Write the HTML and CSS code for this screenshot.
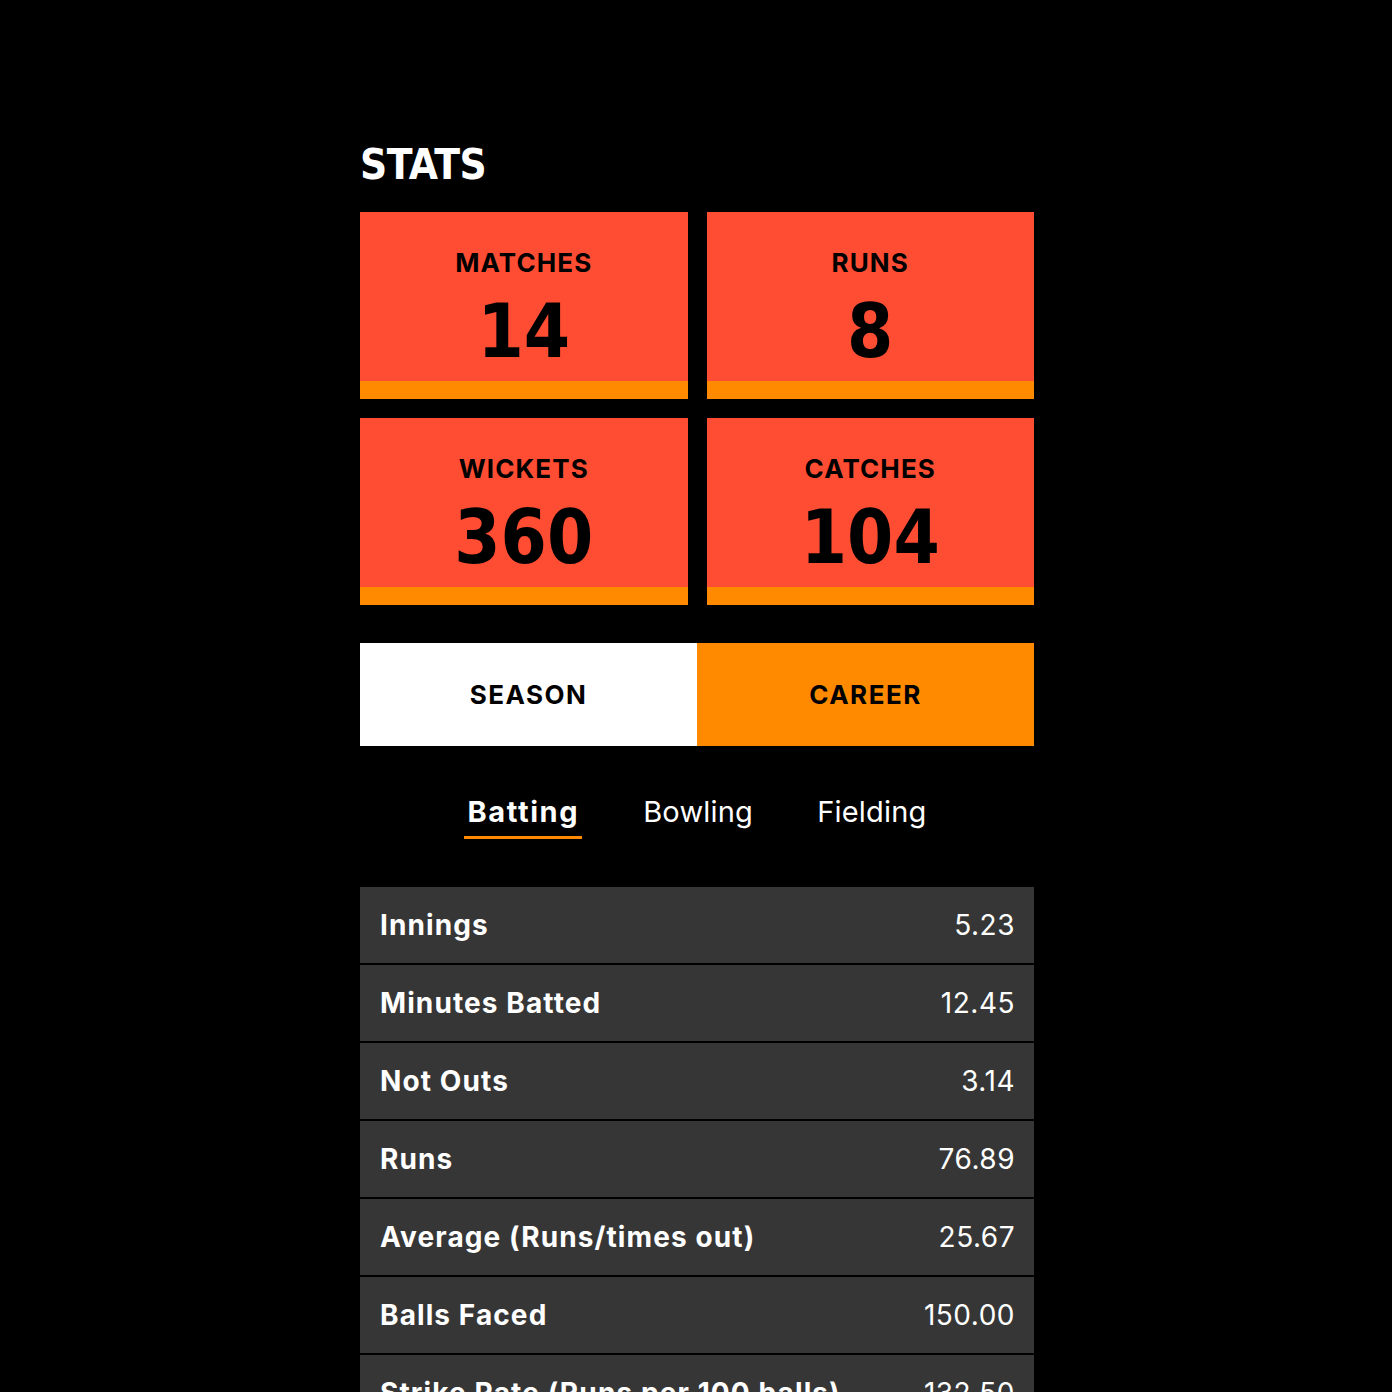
FILE: index.html
```html
<!DOCTYPE html>
<html>
<head>
<meta charset="utf-8">
<link rel="stylesheet" href="styles.css">
</head>
<body>
<main class="stats">
  <h1 class="title">STATS</h1>
  <section class="cards">
    <div class="card"><div class="card-label">MATCHES</div><div class="card-value">14</div></div>
    <div class="card"><div class="card-label">RUNS</div><div class="card-value">8</div></div>
    <div class="card"><div class="card-label">WICKETS</div><div class="card-value">360</div></div>
    <div class="card"><div class="card-label">CATCHES</div><div class="card-value">104</div></div>
  </section>
  <div class="toggle">
    <button class="toggle-btn toggle-season">SEASON</button>
    <button class="toggle-btn toggle-career">CAREER</button>
  </div>
  <nav class="tabs">
    <span class="tab tab-active">Batting</span>
    <span class="tab">Bowling</span>
    <span class="tab">Fielding</span>
  </nav>
  <ul class="rows">
    <li class="row"><span class="row-label">Innings</span><span class="row-value">5.23</span></li>
    <li class="row"><span class="row-label">Minutes Batted</span><span class="row-value">12.45</span></li>
    <li class="row"><span class="row-label">Not Outs</span><span class="row-value">3.14</span></li>
    <li class="row"><span class="row-label">Runs</span><span class="row-value">76.89</span></li>
    <li class="row"><span class="row-label">Average (Runs/times out)</span><span class="row-value">25.67</span></li>
    <li class="row"><span class="row-label">Balls Faced</span><span class="row-value">150.00</span></li>
    <li class="row"><span class="row-label">Strike Rate (Runs per 100 balls)</span><span class="row-value">132.50</span></li>
  </ul>
</main>
</body>
</html>
```
FILE: styles.css
```css
html, body {
  margin: 0;
  padding: 0;
  background: #000;
  height: 1392px;
  overflow: hidden;
}
.stats {
  width: 674px;
  margin-left: 360px;
  padding-top: 142px;
  font-family: Inter, "Noto Sans", sans-serif;
  color: #fff;
}
.title {
  margin: 0 0 24px;
  font-family: "DejaVu Sans Condensed", "DejaVu Sans", sans-serif;
  font-weight: 900;
  font-size: 42px;
  line-height: 46px;
  letter-spacing: -0.5px;
  color: #fff;
}
.cards {
  display: grid;
  grid-template-columns: 1fr 1fr;
  gap: 19px;
}
.card {
  height: 169px;
  background: #ff4d33;
  border-bottom: 18px solid #ff8a00;
  display: flex;
  flex-direction: column;
  align-items: center;
  color: #000;
}
.card-label {
  margin-top: 37px;
  font-weight: 700;
  font-size: 26px;
  line-height: 28px;
  letter-spacing: 1.1px;
}
.card-value {
  margin-top: 17px;
  font-family: "DejaVu Sans Condensed", "DejaVu Sans", sans-serif;
  font-weight: 900;
  font-size: 74px;
  line-height: 74px;
}
.toggle {
  display: flex;
  margin-top: 38px;
  height: 103px;
}
.toggle-btn {
  flex: 1;
  border: 0;
  margin: 0;
  padding: 0;
  font-family: Inter, "Noto Sans", sans-serif;
  font-weight: 700;
  font-size: 26px;
  letter-spacing: 1.5px;
  color: #000;
}
.toggle-season { background: #fff; }
.toggle-career { background: #ff8a00; }
.tabs {
  display: flex;
  justify-content: center;
  gap: 58px;
  margin-top: 46px;
  height: 48px;
}
.tab {
  font-size: 29px;
  line-height: 40px;
  font-weight: 400;
  color: #fff;
  padding: 0 3px;
  height: 47px;
  box-sizing: border-box;
  letter-spacing: 0.2px;
}
.tab-active {
  font-weight: 700;
  letter-spacing: 1.6px;
  border-bottom: 3px solid #ff8a00;
}
.rows {
  list-style: none;
  margin: 47px 0 0;
  padding: 0;
  display: flex;
  flex-direction: column;
  gap: 2px;
}
.row {
  height: 76px;
  background: #363636;
  display: flex;
  justify-content: space-between;
  align-items: center;
  padding: 0 19px 0 20px;
  font-size: 28px;
}
.row-label { font-weight: 700; letter-spacing: 1.1px; }
.row-value { font-weight: 400; letter-spacing: 0.5px; }
```
